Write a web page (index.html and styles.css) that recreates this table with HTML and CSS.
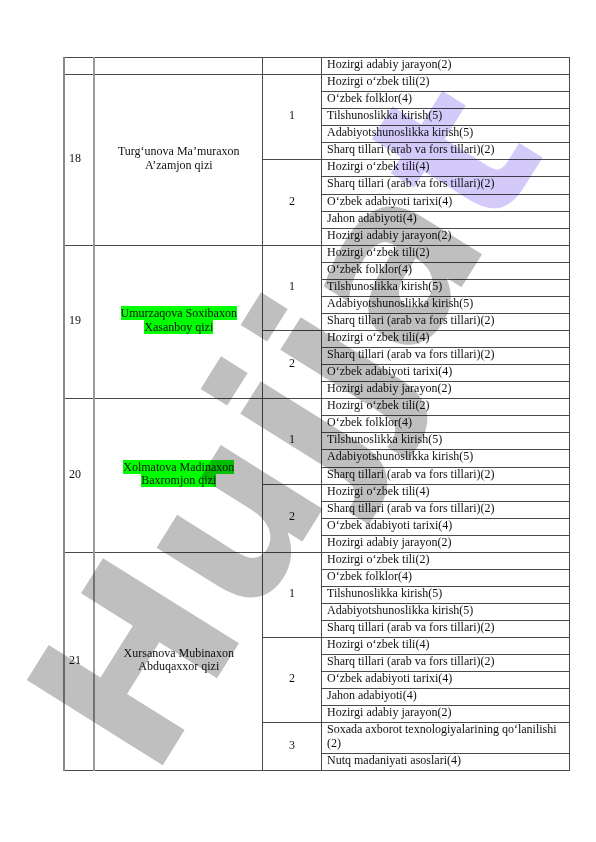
FILE: index.html
```html
<!DOCTYPE html>
<html lang="uz">
<head>
<meta charset="utf-8">
<title>Jadval</title>
<link rel="stylesheet" href="styles.css">
</head>
<body>
<div class="sheet">
<div class="page">
<table class="grid">
<colgroup><col class="c1"><col class="c2"><col class="c3"><col class="c4"></colgroup>
<tbody>
<tr><td class="num"></td><td class="name"></td><td class="sem"></td><td class="subj">Hozirgi adabiy jarayon(2)</td></tr>

<tr><td class="num" rowspan="10">18</td><td class="name" rowspan="10">Turg‘unova Ma’muraxon<br>A’zamjon qizi</td><td class="sem" rowspan="5">1</td><td class="subj">Hozirgi o‘zbek tili(2)</td></tr>
<tr><td class="subj">O‘zbek folklor(4)</td></tr>
<tr><td class="subj">Tilshunoslikka kirish(5)</td></tr>
<tr><td class="subj">Adabiyotshunoslikka kirish(5)</td></tr>
<tr><td class="subj">Sharq tillari (arab va fors tillari)(2)</td></tr>
<tr><td class="sem" rowspan="5">2</td><td class="subj">Hozirgi o‘zbek tili(4)</td></tr>
<tr><td class="subj">Sharq tillari (arab va fors tillari)(2)</td></tr>
<tr><td class="subj">O‘zbek adabiyoti tarixi(4)</td></tr>
<tr><td class="subj">Jahon adabiyoti(4)</td></tr>
<tr><td class="subj">Hozirgi adabiy jarayon(2)</td></tr>

<tr><td class="num" rowspan="9">19</td><td class="name" rowspan="9"><span class="hl">Umurzaqova Soxibaxon<br>Xasanboy qizi</span></td><td class="sem" rowspan="5">1</td><td class="subj">Hozirgi o‘zbek tili(2)</td></tr>
<tr><td class="subj">O‘zbek folklor(4)</td></tr>
<tr><td class="subj">Tilshunoslikka kirish(5)</td></tr>
<tr><td class="subj">Adabiyotshunoslikka kirish(5)</td></tr>
<tr><td class="subj">Sharq tillari (arab va fors tillari)(2)</td></tr>
<tr><td class="sem" rowspan="4">2</td><td class="subj">Hozirgi o‘zbek tili(4)</td></tr>
<tr><td class="subj">Sharq tillari (arab va fors tillari)(2)</td></tr>
<tr><td class="subj">O‘zbek adabiyoti tarixi(4)</td></tr>
<tr><td class="subj">Hozirgi adabiy jarayon(2)</td></tr>

<tr><td class="num" rowspan="9">20</td><td class="name" rowspan="9"><span class="hl">Xolmatova Madinaxon<br>Baxromjon qizi</span></td><td class="sem" rowspan="5">1</td><td class="subj">Hozirgi o‘zbek tili(2)</td></tr>
<tr><td class="subj">O‘zbek folklor(4)</td></tr>
<tr><td class="subj">Tilshunoslikka kirish(5)</td></tr>
<tr><td class="subj">Adabiyotshunoslikka kirish(5)</td></tr>
<tr><td class="subj">Sharq tillari (arab va fors tillari)(2)</td></tr>
<tr><td class="sem" rowspan="4">2</td><td class="subj">Hozirgi o‘zbek tili(4)</td></tr>
<tr><td class="subj">Sharq tillari (arab va fors tillari)(2)</td></tr>
<tr><td class="subj">O‘zbek adabiyoti tarixi(4)</td></tr>
<tr><td class="subj">Hozirgi adabiy jarayon(2)</td></tr>

<tr><td class="num" rowspan="12">21</td><td class="name" rowspan="12">Xursanova Mubinaxon<br>Abduqaxxor qizi</td><td class="sem" rowspan="5">1</td><td class="subj">Hozirgi o‘zbek tili(2)</td></tr>
<tr><td class="subj">O‘zbek folklor(4)</td></tr>
<tr><td class="subj">Tilshunoslikka kirish(5)</td></tr>
<tr><td class="subj">Adabiyotshunoslikka kirish(5)</td></tr>
<tr><td class="subj">Sharq tillari (arab va fors tillari)(2)</td></tr>
<tr><td class="sem" rowspan="5">2</td><td class="subj">Hozirgi o‘zbek tili(4)</td></tr>
<tr><td class="subj">Sharq tillari (arab va fors tillari)(2)</td></tr>
<tr><td class="subj">O‘zbek adabiyoti tarixi(4)</td></tr>
<tr><td class="subj">Jahon adabiyoti(4)</td></tr>
<tr><td class="subj">Hozirgi adabiy jarayon(2)</td></tr>
<tr><td class="sem" rowspan="2">3</td><td class="subj">Soxada axborot texnologiyalarining qo‘lanilishi (2)</td></tr>
<tr><td class="subj">Nutq madaniyati asoslari(4)</td></tr>
</tbody>
</table>
</div>
<div class="watermark" aria-hidden="true"><span class="wm-grey">Hujja</span><span class="wm-purple">t</span></div>
</div>
</body>
</html>
```

FILE: styles.css
```css
html, body {
  margin: 0;
  padding: 0;
  background: #ffffff;
}

body {
  font-family: "Liberation Serif", "Times New Roman", serif;
  font-size: 12px;
  color: #111111;
}

.sheet {
  position: relative;
  width: 596px;
  height: 842px;
  overflow: hidden;
}

.page {
  padding: 57px 0 0 63px;
}

.grid {
  border-collapse: collapse;
  table-layout: fixed;
  width: 505px;
}

.c1 { width: 30px; }
.c2 { width: 168.5px; }
.c3 { width: 58.5px; }
.c4 { width: 248px; }

.grid td {
  border: 1px solid #4a4a4a;
  padding: 0 5px 2.28px 5.5px;
  line-height: 13.8px;
  vertical-align: middle;
}

.grid td.num {
  border-left: 2px solid #8a8a8a;
  text-align: left;
  padding-left: 4px;
}

.grid td.name {
  border-left: 2px solid #9a9a9a;
  text-align: center;
}

.grid td.sem {
  text-align: center;
}

.grid td.subj {
  text-align: left;
}

.hl {
  background: #00ff00;
  line-height: 13.3px;
}

.watermark {
  position: absolute;
  left: -165px;
  top: 316px;
  width: 900px;
  text-align: center;
  font-family: "DejaVu Sans", sans-serif;
  font-weight: bold;
  font-size: 220px;
  line-height: 220px;
  transform: rotate(-58deg);
  transform-origin: 50% 50%;
  mix-blend-mode: multiply;
  pointer-events: none;
  white-space: nowrap;
}

.wm-grey {
  color: #bfbfbf;
}

.wm-purple {
  color: #d4cafa;
}
```
